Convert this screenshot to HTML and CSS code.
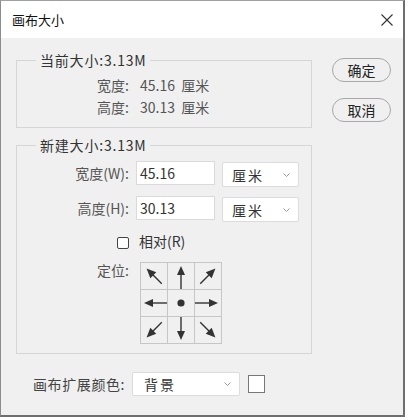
FILE: index.html
```html
<!DOCTYPE html>
<html lang="zh-CN">
<head>
  <meta charset="UTF-8">
  <title>画布大小</title>
  <link rel="stylesheet" href="styles.css">
</head>
<body>
  <div class="window">
    <div class="titlebar">
      <span class="title">画布大小</span>
      <svg class="close" viewBox="0 0 12 12" width="12" height="12">
        <path d="M0.5 0.5 L11.5 11.5 M11.5 0.5 L0.5 11.5" stroke="#333" stroke-width="1.1" fill="none"/>
      </svg>
    </div>
    <div class="content">
      <div class="main">
        <fieldset class="group current">
          <legend>当前大小:3.13M</legend>
          <div class="row"><span class="label">宽度:</span><span class="value">45.16&nbsp; 厘米</span></div>
          <div class="row"><span class="label">高度:</span><span class="value">30.13&nbsp; 厘米</span></div>
        </fieldset>

        <fieldset class="group new">
          <legend>新建大小:3.13M</legend>
          <div class="field-row">
            <span class="label">宽度(W):</span>
            <div class="input">45.16</div>
            <div class="select"><span class="opt">厘米</span><svg class="chev" viewBox="0 0 7 4" width="7" height="4"><path d="M0.5 0.5 L3.5 3.5 L6.5 0.5" stroke="#999" fill="none"/></svg></div>
          </div>
          <div class="field-row">
            <span class="label">高度(H):</span>
            <div class="input">30.13</div>
            <div class="select"><span class="opt">厘米</span><svg class="chev" viewBox="0 0 7 4" width="7" height="4"><path d="M0.5 0.5 L3.5 3.5 L6.5 0.5" stroke="#999" fill="none"/></svg></div>
          </div>
          <div class="check-row">
            <span class="label"><span class="checkbox"></span></span>
            <span>相对(R)</span>
          </div>
          <div class="anchor-row">
            <span class="label">定位:</span>
            <div class="anchor">
              <div class="cell"><svg viewBox="0 0 26 26"><g transform="rotate(-45 13 13)"><path d="M13 24 V11"/><polygon points="13,2.5 8.8,12 17.2,12"/></g></svg></div>
              <div class="cell"><svg viewBox="0 0 26 26"><g><path d="M13 26 V11"/><polygon points="13,3 9,12 17,12"/></g></svg></div>
              <div class="cell"><svg viewBox="0 0 26 26"><g transform="rotate(45 13 13)"><path d="M13 24 V11"/><polygon points="13,2.5 8.8,12 17.2,12"/></g></svg></div>
              <div class="cell"><svg viewBox="0 0 26 26"><g transform="rotate(-90 13 13)"><path d="M13 26 V11"/><polygon points="13,3 9,12 17,12"/></g></svg></div>
              <div class="cell"><svg viewBox="0 0 26 26"><circle cx="13" cy="13" r="3.6"/></svg></div>
              <div class="cell"><svg viewBox="0 0 26 26"><g transform="rotate(90 13 13)"><path d="M13 26 V11"/><polygon points="13,3 9,12 17,12"/></g></svg></div>
              <div class="cell"><svg viewBox="0 0 26 26"><g transform="rotate(-135 13 13)"><path d="M13 24 V11"/><polygon points="13,2.5 8.8,12 17.2,12"/></g></svg></div>
              <div class="cell"><svg viewBox="0 0 26 26"><g transform="rotate(180 13 13)"><path d="M13 26 V11"/><polygon points="13,3 9,12 17,12"/></g></svg></div>
              <div class="cell"><svg viewBox="0 0 26 26"><g transform="rotate(135 13 13)"><path d="M13 24 V11"/><polygon points="13,2.5 8.8,12 17.2,12"/></g></svg></div>
            </div>
          </div>
        </fieldset>

        <div class="extend">
          <span class="extend-label">画布扩展颜色:</span>
          <div class="select wide"><span class="opt">背景</span><svg class="chev" viewBox="0 0 7 4" width="7" height="4"><path d="M0.5 0.5 L3.5 3.5 L6.5 0.5" stroke="#999" fill="none"/></svg></div>
          <span class="swatch"></span>
        </div>
      </div>

      <div class="actions">
        <button>确定</button>
        <button>取消</button>
      </div>
    </div>
  </div>
</body>
</html>
```

FILE: styles.css
```css
body {
  margin: 0;
  background: #fff;
  font-family: "Noto Sans CJK SC", "Noto Sans", sans-serif;
  font-size: 14px;
  color: #333;
}
.window {
  width: 405px;
  height: 417px;
  box-sizing: border-box;
  border-left: 1px solid #8c8c8c;
  border-top: 1px solid #a0a0a0;
  border-right: 2px solid #6e6e6e;
  border-bottom: 2px solid #6e6e6e;
  background: #f0f0f0;
  display: flex;
  flex-direction: column;
}
.titlebar {
  flex: none;
  height: 37px;
  background: #fff;
  display: flex;
  align-items: center;
  justify-content: space-between;
  padding: 0 10px 0 11px;
}
.title {
  font-size: 13px;
  color: #111;
}
.content {
  display: flex;
  gap: 20px;
  padding: 13px 0 0 15px;
}
.main {
  width: 296px;
  display: flex;
  flex-direction: column;
}
.group {
  margin: 0;
  padding: 5px 0 9px;
  border: 1px solid #d6d6d6;
  min-width: 0;
}
.group legend {
  margin-left: 19px;
  padding: 0 4px;
  line-height: 18px;
  color: #333;
  letter-spacing: 0.8px;
}
.row {
  display: grid;
  grid-template-columns: 112px auto;
  column-gap: 11px;
  align-items: center;
  height: 22px;
}
.label {
  text-align: right;
  color: #555;
}
.value {
  color: #555;
}
.new {
  margin-top: 8px;
  padding-top: 7px;
  display: flex;
  flex-direction: column;
}
.field-row {
  display: grid;
  grid-template-columns: 112px 79px 77px;
  column-gap: 7px;
  align-items: start;
  height: 25px;
  margin-bottom: 10px;
}
.field-row .label {
  line-height: 24px;
}
.input {
  height: 24px;
  box-sizing: border-box;
  border: 1px solid #dadada;
  background: #fff;
  padding-left: 3px;
  line-height: 22px;
  color: #333;
}
.select {
  height: 25px;
  box-sizing: border-box;
  margin-top: 1px;
  border: 1px solid #dcdcdc;
  border-radius: 2px;
  background: #fff;
  padding: 0 8px 0 9px;
  display: flex;
  align-items: center;
  justify-content: space-between;
  color: #333;
}
.opt {
  letter-spacing: 2px;
}
.chev {
  display: block;
}
.check-row {
  display: grid;
  grid-template-columns: 112px auto;
  column-gap: 10px;
  align-items: center;
  height: 18px;
}
.checkbox {
  display: inline-block;
  width: 12px;
  height: 12px;
  box-sizing: border-box;
  border: 1px solid #444;
  border-radius: 2px;
  background: #fff;
  vertical-align: middle;
}
.anchor-row {
  display: grid;
  grid-template-columns: 112px auto;
  column-gap: 11px;
  align-items: start;
  margin-top: 13px;
}
.anchor-row .label {
  line-height: 16px;
}
.anchor {
  display: grid;
  grid-template-columns: repeat(3, 26px);
  grid-template-rows: repeat(3, 26px);
  gap: 1px;
  width: max-content;
  border: 1px solid #c6c6c6;
  background: #c6c6c6;
}
.cell {
  background: #f0f0f0;
}
.cell svg {
  display: block;
  width: 26px;
  height: 26px;
}
.cell path {
  stroke: #333;
  stroke-width: 1.4;
  fill: none;
}
.cell polygon,
.cell circle {
  fill: #333;
}
.extend {
  display: flex;
  align-items: center;
  margin-top: 18px;
  padding-left: 17px;
}
.extend-label {
  color: #444;
  letter-spacing: 0.6px;
}
.select.wide {
  width: 108px;
  height: 24px;
  margin: 0 0 0 7px;
  padding-left: 11px;
}
.swatch {
  width: 17px;
  height: 18px;
  box-sizing: border-box;
  margin-left: 8px;
  border: 1px solid #777;
  background: #fff;
}
.actions {
  display: flex;
  flex-direction: column;
  gap: 16px;
  padding-top: 7px;
}
button {
  width: 59px;
  height: 24px;
  border: 1px solid #a8a8a8;
  border-radius: 12px;
  background: #f0f0f0;
  font-family: inherit;
  font-size: 14px;
  color: #222;
  padding: 0;
  line-height: 22px;
}
```
